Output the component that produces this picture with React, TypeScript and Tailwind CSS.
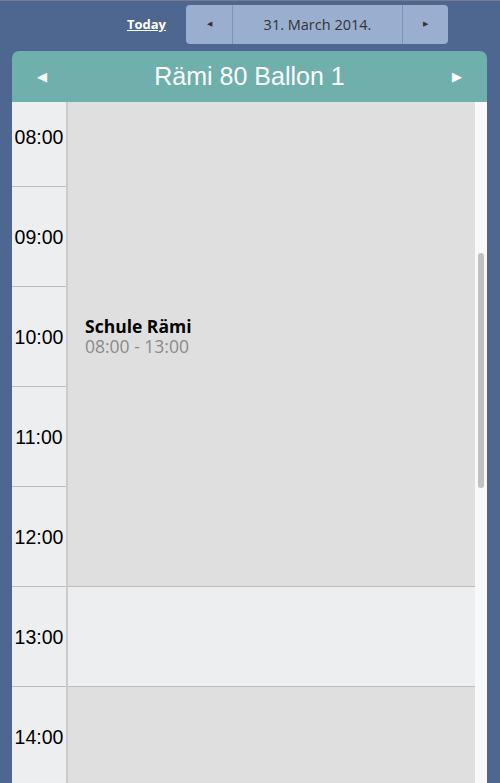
import React from "react";

const hours = ["08:00", "09:00", "10:00", "11:00", "12:00", "13:00", "14:00"];

export default function App() {
  return (
    <div className="w-[500px] h-[783px] overflow-hidden bg-[#4e6790] flex flex-col border-t border-[#777d88]" style={{ fontFamily: '"Open Sans", sans-serif' }}>
      {/* top nav */}
      <div className="h-[50px] flex items-start pt-[4px]">
        <div className="w-[186px] flex justify-end pr-[20px] pt-[10px]">
          <a className="text-white font-bold text-[13px] underline leading-[18px]">Today</a>
        </div>
        <div className="w-[262px] h-[39px] rounded-[4px] bg-[#9aafcf] flex text-[#333]">
          <div className="w-[47px] flex items-center justify-center border-r border-[#7e93b6] text-[7px]">◀</div>
          <div className="flex-1 flex items-center justify-center text-[14.5px]">31. March 2014.</div>
          <div className="w-[46px] flex items-center justify-center border-l border-[#7e93b6] text-[7px]">▶</div>
        </div>
      </div>
      {/* panel */}
      <div className="ml-[12px] w-[475px] flex-1 flex flex-col rounded-t-[7px] overflow-hidden">
        <div className="h-[51px] bg-[#6fafac] flex items-center justify-between px-[25px] text-white" style={{ fontFamily: '"Liberation Sans", Arial, sans-serif' }}>
          <span className="text-[13px]">◀</span>
          <span className="text-[25px] leading-none pb-[1px]">Rämi 80 Ballon 1</span>
          <span className="text-[13px]">▶</span>
        </div>
        <div className="flex-1 flex overflow-hidden bg-[#f7f7f7]">
          <div className="flex-1 overflow-hidden">
            <div className="-mt-[15px] flex">
              <div className="w-[56px] bg-[#edeef0] border-r-2 border-[#cbcbcd]" style={{ fontFamily: '"Liberation Sans", Arial, sans-serif' }}>
                {hours.map((h) => (
                  <div key={h} className="h-[100px] border-b border-[#bdbdbd] flex items-center justify-center text-[19.5px] leading-[22px] text-black">
                    {h}
                  </div>
                ))}
              </div>
              <div className="flex-1 flex flex-col">
                <div className="h-[500px] bg-[#dfdfdf] border-b border-[#bdbdbd] flex flex-col justify-center pl-[17px] pb-[2px]">
                  <div className="text-[17.5px] font-bold text-black leading-[20px]">Schule Rämi</div>
                  <div className="text-[17.5px] text-[#8a8a8a] leading-[20px]">08:00 - 13:00</div>
                </div>
                <div className="h-[100px] bg-[#edeef0] border-b border-[#bdbdbd]" />
                <div className="h-[100px] bg-[#dfdfdf] border-b border-[#bdbdbd]" />
              </div>
            </div>
          </div>
          <div className="w-[12px] bg-[#f9f9f9] pt-[151px] flex justify-center">
            <div className="w-[6px] h-[235px] rounded-full bg-[#c1c1c1]" />
          </div>
        </div>
      </div>
    </div>
  );
}
